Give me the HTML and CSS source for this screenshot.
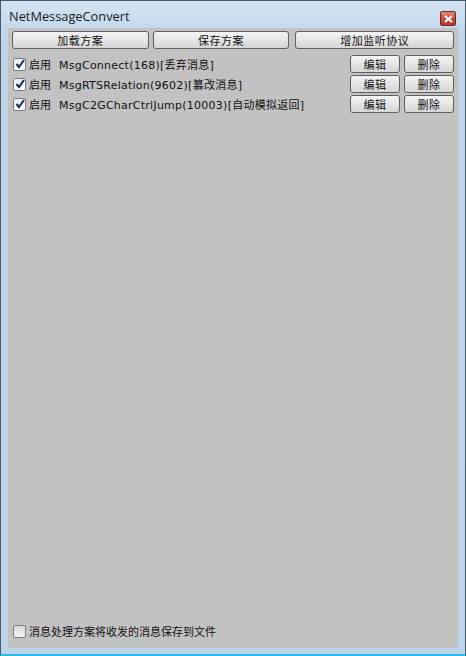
FILE: index.html
```html
<!DOCTYPE html>
<html>
<head>
<meta charset="utf-8">
<link rel="stylesheet" href="styles.css">
</head>
<body>
<div class="window">
  <div class="titlebar">
    <span class="title">NetMessageConvert</span>
    <span class="close"><svg width="9" height="8" viewBox="0 0 9 8"><path d="M1 1 L8 7 M8 1 L1 7" stroke="#fff" stroke-width="2"/></svg></span>
  </div>
  <div class="client">
    <div class="toolbar">
      <button class="btn b1">加载方案</button>
      <button class="btn b2">保存方案</button>
      <button class="btn b3">增加监听协议</button>
    </div>
    <div class="rows">
      <div class="row">
        <span class="cb on"><svg width="10" height="10" viewBox="0 0 10 10"><path d="M1.5 5 L4 8 L9 1" fill="none" stroke="#1b2a55" stroke-width="2"/></svg></span>
        <span class="lbl">启用</span>
        <span class="msg">MsgConnect(168)[丢弃消息]</span>
        <button class="btn small">编辑</button>
        <button class="btn small">删除</button>
      </div>
      <div class="row">
        <span class="cb on"><svg width="10" height="10" viewBox="0 0 10 10"><path d="M1.5 5 L4 8 L9 1" fill="none" stroke="#1b2a55" stroke-width="2"/></svg></span>
        <span class="lbl">启用</span>
        <span class="msg">MsgRTSRelation(9602)[篡改消息]</span>
        <button class="btn small">编辑</button>
        <button class="btn small">删除</button>
      </div>
      <div class="row">
        <span class="cb on"><svg width="10" height="10" viewBox="0 0 10 10"><path d="M1.5 5 L4 8 L9 1" fill="none" stroke="#1b2a55" stroke-width="2"/></svg></span>
        <span class="lbl">启用</span>
        <span class="msg">MsgC2GCharCtrlJump(10003)[自动模拟返回]</span>
        <button class="btn small">编辑</button>
        <button class="btn small">删除</button>
      </div>
    </div>
    <div class="footer">
      <span class="cb"></span>
      <span class="lbl">消息处理方案将收发的消息保存到文件</span>
    </div>
  </div>
</div>
</body>
</html>
```
FILE: styles.css
```css
html, body {
  margin: 0;
  padding: 0;
}
body {
  width: 466px;
  height: 656px;
  overflow: hidden;
  font-family: "DejaVu Sans", "Noto Sans CJK SC", sans-serif;
}
.window {
  box-sizing: border-box;
  width: 466px;
  height: 656px;
  border: 1px solid #4a5968;
  border-bottom: 2px solid #2cb9e6;
  background: linear-gradient(#d4e3f3, #bdd4ea 40px, #bcd3ea);
  display: flex;
  flex-direction: column;
  padding: 0 7px 6px 7px;
}
.titlebar {
  height: 27px;
  display: flex;
  align-items: flex-start;
  justify-content: space-between;
}
.title {
  font-family: "Open Sans", "Noto Sans", sans-serif;
  font-size: 12.8px;
  color: #1a1a1a;
  margin-top: 6px;
  margin-left: 1px;
}
.close {
  box-sizing: border-box;
  width: 16px;
  height: 15px;
  margin-top: 10px;
  margin-right: 2px;
  border: 1px solid #6b2a22;
  border-radius: 2px;
  background: linear-gradient(#e08a7c, #c8503f 50%, #b33b2b);
  display: flex;
  align-items: center;
  justify-content: center;
}
.client {
  flex: 1;
  background: #c2c2c2;
  display: flex;
  flex-direction: column;
  padding: 3px 4px 10px 4px;
}
.toolbar {
  display: flex;
  gap: 4px;
  height: 18px;
}
.btn {
  box-sizing: border-box;
  height: 18px;
  margin: 0;
  padding: 0;
  border: 1px solid #5f5f5f;
  border-radius: 3px;
  background: linear-gradient(#f4f4f4, #e2e2e2 60%, #d6d6d6);
  font-family: "Noto Sans CJK SC", sans-serif;
  font-size: 11px;
  line-height: 16px;
  color: #111;
  letter-spacing: 0.5px;
}
.b1 { width: 137px; }
.b2 { width: 137px; }
.b3 { width: 159px; margin-left: 2px; }
.rows {
  display: flex;
  flex-direction: column;
  gap: 2px;
  margin-top: 6px;
  flex: 1;
}
.row {
  display: flex;
  align-items: center;
  height: 18px;
}
.cb {
  box-sizing: border-box;
  width: 13px;
  height: 13px;
  margin-left: 1px;
  border: 1px solid #7d7d7d;
  border-radius: 2px;
  background: linear-gradient(#d8d8d8, #f4f4f4);
  display: flex;
  align-items: center;
  justify-content: center;
  flex: none;
}
.cb.on {
  background: linear-gradient(#e8eef8, #ffffff);
}
.lbl {
  font-family: "Noto Sans CJK SC", sans-serif;
  font-size: 11px;
  color: #111;
  margin-left: 3px;
}
.msg {
  font-size: 11px;
  color: #111;
  margin-left: 8px;
  flex: 1;
  letter-spacing: 0.25px;
}
.small {
  width: 50px;
  margin-left: 4px;
}
.footer {
  display: flex;
  align-items: center;
  height: 14px;
}
```
